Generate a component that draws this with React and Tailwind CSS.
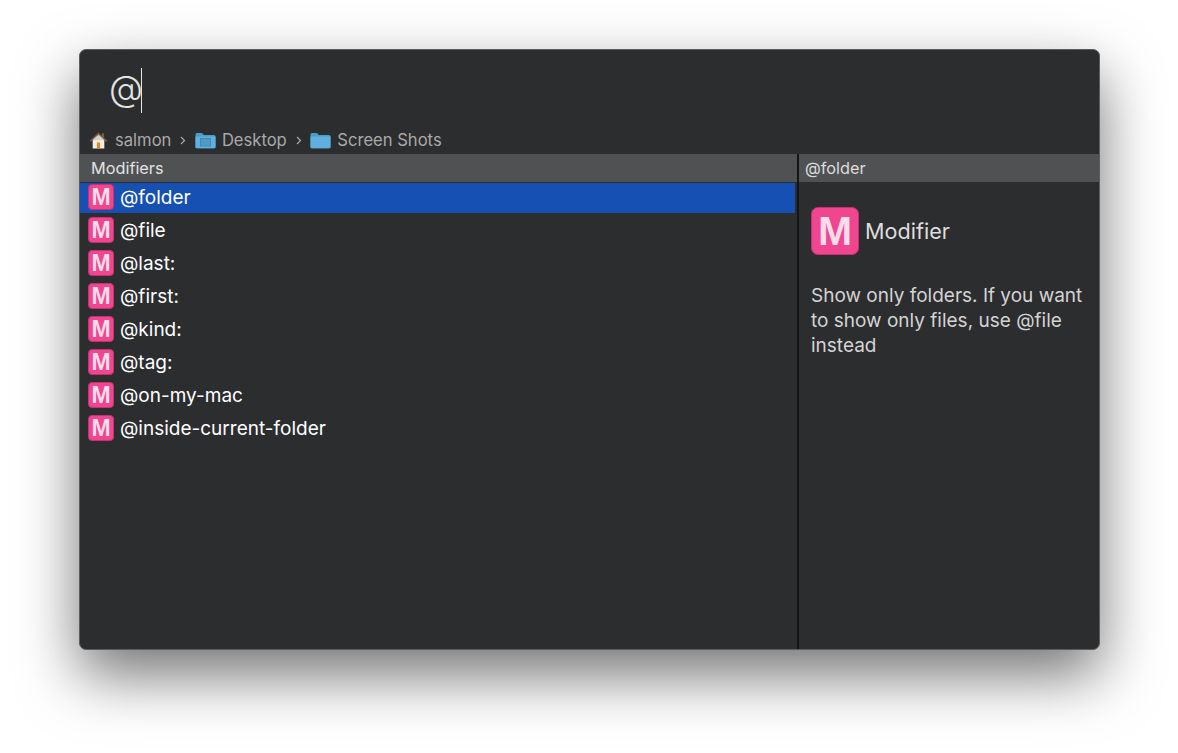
import React from "react";

const items = [
  "@folder",
  "@file",
  "@last:",
  "@first:",
  "@kind:",
  "@tag:",
  "@on-my-mac",
  "@inside-current-folder",
];

const font = "font-['Inter','Liberation_Sans',sans-serif]";

const HomeIcon = () => (
  <svg width="19" height="19" viewBox="0 0 18 18">
    <path d="M3.5 8.5 H14.5 V16.5 H3.5 Z" fill="#f1eee6" />
    <path d="M0.5 9.5 L9 1.5 L17.5 9.5 L15.8 10.2 L9 4.2 L2.2 10.2 Z" fill="#7d5f44" />
    <path d="M4 7.8 L9 3.6 L14 7.8 L14 8.8 L4 8.8 Z" fill="#d8d2c5" />
    <rect x="12.3" y="2.2" width="2" height="4" fill="#7d5f44" />
    <rect x="7.5" y="10.8" width="3" height="5.7" fill="#e8861c" />
  </svg>
);

const FolderIcon = ({ inner }) => (
  <svg width="21" height="17" viewBox="0 0 21 17">
    <path d="M0.5 2.5 Q0.5 1 2 1 H7 L8.8 3 H19 Q20.5 3 20.5 4.5 V15 Q20.5 16.2 19 16.2 H2 Q0.5 16.2 0.5 15 Z" fill="#4a9ccb" />
    <path d="M0.5 4.6 H20.5 V15 Q20.5 16.2 19 16.2 H2 Q0.5 16.2 0.5 15 Z" fill="#5fb0dc" />
    {inner && <rect x="5.5" y="6.5" width="10" height="7.5" fill="#4f9ac6" stroke="#3a7ea8" strokeWidth="0.7" />}
  </svg>
);

const Chevron = () => (
  <svg width="6" height="9" viewBox="0 0 6 9" className="mx-[8.75px]">
    <path d="M1 1 L4.5 4.5 L1 8" fill="none" stroke="#a8a8a8" strokeWidth="1.2" />
  </svg>
);

const Badge = () => (
  <div className="mb-[2px] flex h-[26px] w-[26px] shrink-0 items-center justify-center rounded-[4px] border border-[#c92f72] bg-[#f0468f] font-['Liberation_Sans',sans-serif] text-[23px] leading-none font-bold text-[#fbdcea]">
    M
  </div>
);

export default function App() {
  return (
    <div className={`min-h-[753px] bg-white pt-[49px] pl-[79px] ${font}`}>
      <div className="flex h-[601px] w-[1021px] flex-col overflow-hidden rounded-[7px] border border-[#5c5d5f] bg-[#2c2d2f] shadow-[0_25px_60px_rgba(0,0,0,0.55)]">
        <div className="flex h-[77px] items-center pl-[29px] text-[35px] leading-none font-light text-[#e4e4e4]">
          <span>@</span>
          <span className="mt-[3px] -ml-[2px] h-[45px] w-px bg-[#e8e8e8]"></span>
        </div>
        <div className="flex h-[27px] items-center pl-[9px] text-[16.6px] text-[#a9a9a9]">
          <HomeIcon />
          <span className="ml-[7px]">salmon</span>
          <Chevron />
          <FolderIcon inner />
          <span className="ml-[6px]">Desktop</span>
          <Chevron />
          <FolderIcon />
          <span className="ml-[6px]">Screen Shots</span>
        </div>
        <div className="flex min-h-0 flex-1">
          <div className="flex w-[717px] flex-col">
            <div className="flex h-[28px] items-center bg-[#505153] pl-[11px] text-[16.3px] text-[#e2e2e2]">
              Modifiers
            </div>
            <div className="mt-px w-[715px]">
              {items.map((item, i) => (
                <div
                  key={item}
                  className={`flex h-[30px] items-center gap-[6px] pl-[8px] text-[19px] text-white ${i === 0 ? "bg-[#1750b3]" : "mt-[3px]"}`}
                >
                  <Badge />
                  <span>{item}</span>
                </div>
              ))}
            </div>
          </div>
          <div className="flex flex-1 flex-col border-l-2 border-[#141516]">
            <div className="flex h-[28px] items-center bg-[#505153] pl-[6px] text-[16.3px] text-[#dcdcdc]">
              @folder
            </div>
            <div className="px-[12px] pt-[25px]">
              <div className="flex items-center gap-[6px]">
                <div className="flex h-[48px] w-[48px] items-center justify-center rounded-[7px] border border-[#c92f72] bg-[#f0468f] font-['Liberation_Sans',sans-serif] text-[41px] leading-none font-bold text-[#fbdcea]">
                  M
                </div>
                <span className="text-[21.6px] text-[#dedede]">Modifier</span>
              </div>
              <p className="mt-[28px] text-[19px] leading-[25px] text-[#d4d4d4]">
                Show only folders. If you want to show only files, use @file instead
              </p>
            </div>
          </div>
        </div>
      </div>
    </div>
  );
}
